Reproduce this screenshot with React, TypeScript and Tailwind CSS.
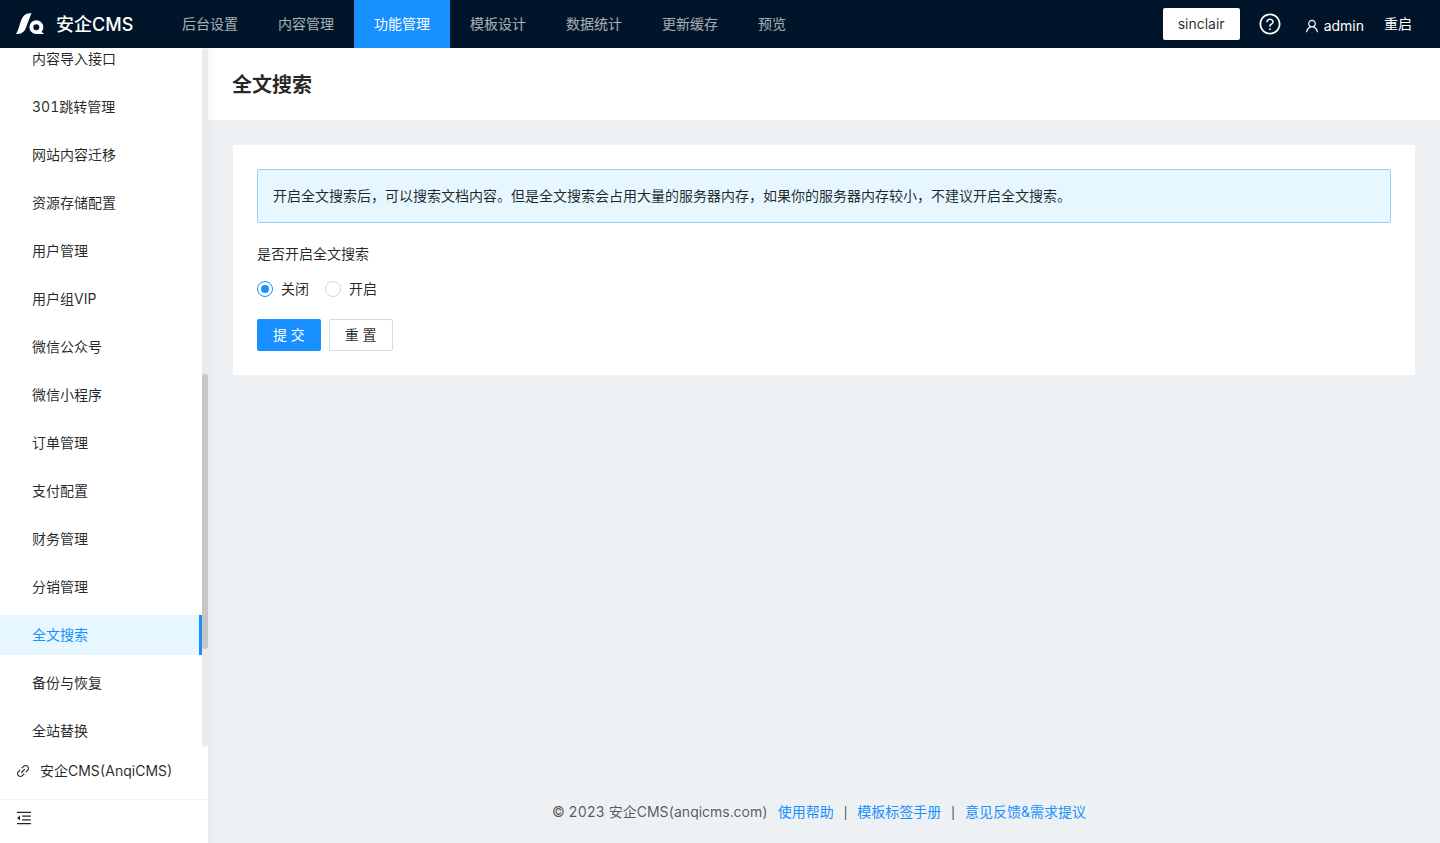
import { useState } from 'react'
import { AiOutlineLink, AiOutlineMenuFold, AiOutlineQuestionCircle, AiOutlineUser } from 'react-icons/ai'
import clsx from 'clsx'

const topNav = ['后台设置', '内容管理', '功能管理', '模板设计', '数据统计', '更新缓存', '预览']

const sideNav = [
  '内容导入接口',
  '301跳转管理',
  '网站内容迁移',
  '资源存储配置',
  '用户管理',
  '用户组VIP',
  '微信公众号',
  '微信小程序',
  '订单管理',
  '支付配置',
  '财务管理',
  '分销管理',
  '全文搜索',
  '备份与恢复',
  '全站替换',
]

const footerLinks = ['使用帮助', '模板标签手册', '意见反馈&需求提议']

function Logo() {
  return (
    <svg viewBox="0 0 28 22" className="h-[22px] w-7" aria-hidden="true">
      <path d="M0 21C2.500 17.500 3.500 11 5.500 6.500C7.500 2 10 .3 15.500 0L9.800 15C8.200 19.300 5.500 21 0 21Z" fill="#fff" />
      <path
        fillRule="evenodd"
        d="M20.300 7.200A7 7 0 0 1 27.300 14.200C27.300 16.200 26.700 17.600 25.600 18.700L28 21H20.300A6.900 6.900 0 0 1 20.300 7.200ZM20.300 11.200A3 3 0 1 0 20.300 17.200A3 3 0 1 0 20.300 11.200Z"
        fill="#fff"
      />
    </svg>
  )
}

function Header() {
  return (
    <header className="flex h-12 shrink-0 items-center bg-[#001529] pl-4 pr-7 text-white">
      <a href="#" className="flex w-[146px] items-center gap-3">
        <Logo />
        <h1 className="pt-0.5 text-lg font-medium">安企CMS</h1>
      </a>
      <nav className="flex h-full flex-1">
        {topNav.map((name) => (
          <a
            key={name}
            href="#"
            className={clsx(
              'flex h-full items-center px-5',
              name === '功能管理' ? 'bg-[#1890ff] text-white' : 'text-white/65',
            )}
          >
            {name}
          </a>
        ))}
      </nav>
      <div className="flex items-center gap-5">
        <button type="button" className="h-8 rounded-xs bg-white px-[15px] text-black/85">
          sinclair
        </button>
        <button type="button" aria-label="帮助" className="-mx-0.5">
          <AiOutlineQuestionCircle size={24} />
        </button>
        <button type="button" className="ml-1 flex items-center gap-1 pt-1">
          <AiOutlineUser size={16} />
          admin
        </button>
        <button type="button">重启</button>
      </div>
    </header>
  )
}

function Sidebar() {
  return (
    <aside className="relative flex w-52 shrink-0 flex-col bg-white shadow-[2px_0_8px_rgba(29,35,41,0.05)]">
      <div className="flex min-h-0 flex-1 overflow-hidden">
        <ul className="-mt-[9px] flex flex-1 flex-col gap-2">
          {sideNav.map((name) => (
            <li key={name}>
              <a
                href="#"
                className={clsx(
                  'flex h-10 items-center pl-8',
                  name === '全文搜索' && 'border-r-3 border-[#1890ff] bg-[#e6f7ff] text-[#1890ff]',
                )}
              >
                {name}
              </a>
            </li>
          ))}
        </ul>
        <div className="flex w-1.5 flex-col rounded-sm bg-[#ebebeb]">
          <div className="grow-[326]" />
          <div className="grow-[275] rounded-sm bg-[#c6c6c6]" />
          <div className="grow-[98]" />
        </div>
      </div>
      <a href="#" className="mt-1 mb-2 flex h-10 items-center gap-[9px] pl-[15px]">
        <AiOutlineLink size={16} />
        安企CMS(AnqiCMS)
      </a>
      <button
        type="button"
        aria-label="收起菜单"
        className="flex h-11 items-center border-t border-[#f0f0f0] pb-2 pl-[15px]"
      >
        <AiOutlineMenuFold size={18} />
      </button>
    </aside>
  )
}

type RadioProps = { label: string; checked: boolean; onChange: () => void }

function Radio({ label, checked, onChange }: RadioProps) {
  return (
    <label className="flex items-center gap-2">
      <input
        type="radio"
        name="fulltext"
        checked={checked}
        onChange={onChange}
        className="grid size-4 appearance-none place-items-center rounded-full border border-[#d9d9d9] bg-white before:size-2 before:rounded-full checked:border-[#1890ff] checked:before:bg-[#1890ff]"
      />
      {label}
    </label>
  )
}

function SearchForm() {
  const [open, setOpen] = useState(false)

  return (
    <form
      className="bg-white p-6"
      onSubmit={(e) => e.preventDefault()}
      onReset={() => setOpen(false)}
    >
      <div className="rounded-xs border border-[#91d5ff] bg-[#e6f7ff] p-[15px]">
        开启全文搜索后，可以搜索文档内容。但是全文搜索会占用大量的服务器内存，如果你的服务器内存较小，不建议开启全文搜索。
      </div>
      <fieldset className="mt-5">
        <legend>是否开启全文搜索</legend>
        <div className="mt-[13px] flex gap-4">
          <Radio label="关闭" checked={!open} onChange={() => setOpen(false)} />
          <Radio label="开启" checked={open} onChange={() => setOpen(true)} />
        </div>
      </fieldset>
      <div className="mt-[19px] flex gap-2">
        <button type="submit" className="h-8 rounded-xs bg-[#1890ff] px-4 text-white">
          提 交
        </button>
        <button type="reset" className="h-8 rounded-xs border border-[#d9d9d9] bg-white px-[15px]">
          重 置
        </button>
      </div>
    </form>
  )
}

function Footer() {
  return (
    <footer className="flex justify-center pr-2.5 pb-5 text-black/65">
      <span className="mr-2.5">© 2023 安企CMS(anqicms.com)</span>
      {footerLinks.map((name, i) => (
        <span key={name}>
          {i > 0 && <span className="mx-2.5 font-['Liberation_Sans',sans-serif]">|</span>}
          <a href="#" className="text-[#1890ff]">
            {name}
          </a>
        </span>
      ))}
    </footer>
  )
}

export default function App() {
  return (
    <div className="flex h-screen flex-col font-['Inter','Noto_Sans_CJK_SC',sans-serif] text-sm leading-[22px] text-black/85 tabular-nums">
      <Header />
      <div className="flex min-h-0 flex-1">
        <Sidebar />
        <main className="flex min-w-0 flex-1 flex-col bg-[#eef1f4]">
          <div className="flex h-18 items-center bg-white px-6 pt-0.5">
            <h2 className="text-xl font-semibold">全文搜索</h2>
          </div>
          <div className="flex-1 p-[25px]">
            <SearchForm />
          </div>
          <Footer />
        </main>
      </div>
    </div>
  )
}
